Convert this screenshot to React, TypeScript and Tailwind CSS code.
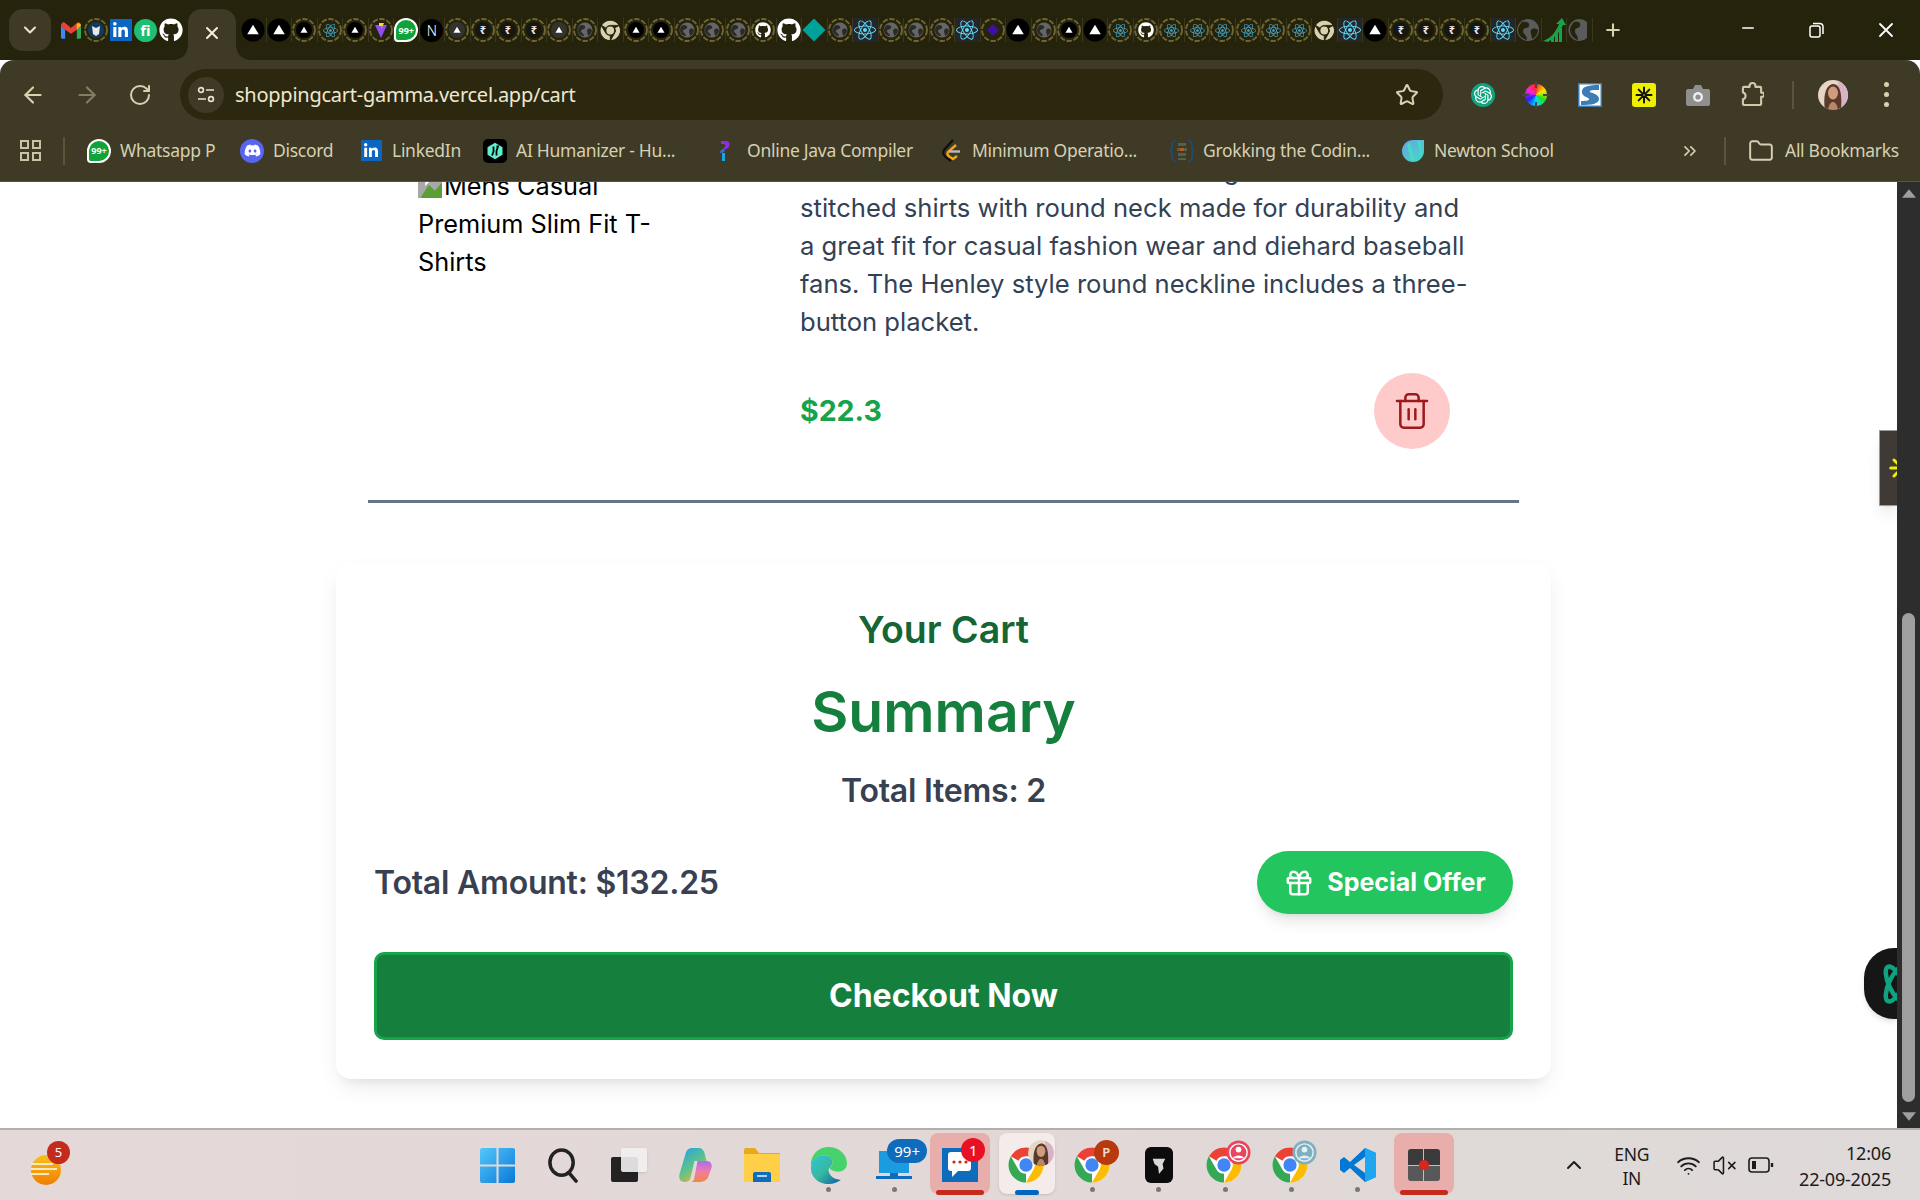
import React from "react";
import { ArrowLeft, ArrowRight, RotateCw, Star, Folder, ChevronDown, X, Plus, Minus, Gift, Trash2, ChevronsRight, ChevronUp, Wifi, VolumeX } from "lucide-react";
import { FaGithub, FaReact, FaDiscord, FaLinkedinIn } from "react-icons/fa";
import { SiOpenai } from "react-icons/si";

const Ring = ({ children }: { children?: React.ReactNode }) => (
  <svg viewBox="0 0 24 24" className="w-[24px] h-[24px]">
    <circle cx="12" cy="12" r="11" fill="none" stroke="#6f6632" strokeWidth="1.9" strokeDasharray="5.5 1.6" />
    {children}
  </svg>
);
const Tri = ({ s = 1, c = "#fff" }: { s?: number; c?: string }) => (
  <path d={`M12 ${12 - 4.5 * s} L${12 + 5 * s} ${12 + 3.8 * s} L${12 - 5 * s} ${12 + 3.8 * s} Z`} fill={c} />
);
const Globe = ({ fill = "#666" }: { fill?: string }) => (
  <g>
    <circle cx="12" cy="12" r="7.5" fill={fill} />
    <path d="M8 7c3 0 5 1 4 3s-4 1-4 3 3 2 3 5c-3 0-6-2-6-6 0-2 1-4 3-5zM15 11c2-1 3 0 4 1 0 3-2 5-4 6 0-3-2-5 0-7z" fill="#2a2a28" />
  </g>
);
const Atom = ({ size = 18, cls = "text-[#61dafb]" }: { size?: number; cls?: string }) => <FaReact size={size} className={cls} />;

function ChromeLogo({ mono, size = 40 }: { mono?: string; size?: number }) {
  const wedge = "M3.34 7A10 10 0 0 1 20.66 7L12 7A5 5 0 0 0 7.67 9.5Z";
  const st = mono ? { stroke: "#26230c", strokeWidth: 0.9 } : {};
  return (
    <svg viewBox="0 0 24 24" width={size} height={size}>
      <circle cx="12" cy="12" r="10" fill={mono ? "#26230c" : "#fff"} />
      <path d={wedge} fill={mono || "#ea4335"} {...st} />
      <path d={wedge} fill={mono || "#fbbc04"} transform="rotate(120 12 12)" {...st} />
      <path d={wedge} fill={mono || "#34a853"} transform="rotate(240 12 12)" {...st} />
      <circle cx="12" cy="12" r="3.8" fill={mono || "#4285f4"} />
    </svg>
  );
}

function TabIcon({ k }: { k: string }) {
  switch (k) {
    case "t":
      return <svg viewBox="0 0 24 24" className="w-[24px] h-[24px]"><circle cx="12" cy="12" r="11.5" fill="#000" /><Tri s={1.15} /></svg>;
    case "rt":
      return <Ring><circle cx="12" cy="12" r="8" fill="#000" /><Tri s={0.7} /></Ring>;
    case "rg":
      return <Ring><circle cx="12" cy="12" r="8" fill="#33332f" /><Tri s={0.7} /></Ring>;
    case "rr":
      return <Ring><circle cx="12" cy="12" r="8" fill="#17170f" /><text x="12" y="16" textAnchor="middle" fontSize="11" fontWeight="700" fill="#eee" fontFamily="'Noto Sans',sans-serif">₹</text></Ring>;
    case "rw":
      return <Ring><Globe /></Ring>;
    case "g":
      return <svg viewBox="0 0 24 24" className="w-[24px] h-[24px]"><circle cx="12" cy="12" r="11" fill="#5a5b5c" /><path d="M6 4c5-1 8 1 7 4s-6 1-6 5 4 3 4 9c-5-1-9-5-9-10 0-3 2-6 4-8zM16 11c3-1 5 0 6 1 0 4-3 8-6 9 0-4-3-7 0-10z" fill="#26230c" /></svg>;
    case "rc":
      return <Ring><foreignObject x="4.5" y="4.5" width="15" height="15"><div className="flex"><Atom size={15} cls="text-[#4aa8c8]" /></div></foreignObject></Ring>;
    case "rh":
      return <Ring><foreignObject x="4" y="4" width="16" height="16"><div className="flex"><FaGithub size={16} className="text-white" /></div></foreignObject></Ring>;
    case "gh":
      return <FaGithub size={24} className="text-white" />;
    case "re":
      return <div className="w-[24px] h-[24px] bg-[#23272a] flex items-center justify-center"><Atom size={22} /></div>;
    case "ch":
      return <ChromeLogo mono="#d8d2ae" size={25} />;
    case "v":
      return <Ring><path d="M6 7 L18 7 L12 20Z" fill="#8f4cf0" /><path d="M10 5h5l-3 7 1-4h-3z" fill="#fdd835" /></Ring>;
    case "w":
      return <div className="w-[24px] h-[24px] rounded-[50%_50%_50%_4px] bg-[#0fa33a] border-2 border-white flex items-center justify-center text-[9px] leading-none font-bold text-white">99+</div>;
    case "n":
      return <div className="w-[23px] h-[23px] rounded-full bg-black flex items-center justify-center text-white text-[14px] font-light">N</div>;
    case "d":
      return <svg viewBox="0 0 24 24" className="w-[24px] h-[24px]"><path d="M12 0.5 L23.5 12 L12 23.5 L0.5 12Z" fill="#00a19b" /></svg>;
    case "p":
      return <Ring><path d="M12 6l6 6-6 6-6-6z" fill="#3f10a0" /></Ring>;
    case "ar":
      return <svg viewBox="0 0 24 24" className="w-[24px] h-[24px]"><path d="M1 23 C9 20 14 14 17 6 L14 6 L20 0 L24 7 L21 7 C18 14 12 20 6 24Z" fill="#16a34a" /><path d="M9 24h3v-6h-3zM13 24h3V13h-3zM17 24h3V10h-3z" fill="#16a34a" /></svg>;
    case "gc":
      return <svg viewBox="0 0 24 24" className="w-[24px] h-[24px]"><path d="M20 4A11 11 0 1 0 20 20Z" fill="#5a5b5c" /><path d="M7 4c5-1 7 1 6 4s-5 1-5 5 3 3 3 9c-4-1-8-5-8-10 0-3 2-6 4-8z" fill="#26230c" /></svg>;
    default:
      return null;
  }
}

const firstTabs = (
  <>
    <div className="w-[25px] flex justify-center">
      <svg viewBox="0 0 24 20" className="w-[20px] h-[19px]">
        <path d="M0 4v14a2 2 0 0 0 2 2h3V9z" fill="#4285f4" />
        <path d="M19 20h3a2 2 0 0 0 2-2V4l-5 5z" fill="#34a853" />
        <path d="M0 4 5 9l7 5 7-5 5-5c0-3-3-5-5-3l-7 6-7-6C3-1 0 1 0 4z" fill="#ea4335" />
        <path d="M19 2v7l5-5c0-2-3-4-5-2z" fill="#fbbc04" />
      </svg>
    </div>
    <div className="w-[25px] flex justify-center">
      <svg viewBox="0 0 24 24" className="w-[24px] h-[24px]"><circle cx="12" cy="12" r="11" fill="none" stroke="#6f6632" strokeWidth="1.9" strokeDasharray="5.5 1.6" /><circle cx="12" cy="12" r="8" fill="#123a5c" /><path d="M8 8l4 2 4-2-1 8-3 2-3-2z" fill="#e8e8e8" /></svg>
    </div>
    <div className="w-[25px] flex justify-center">
      <div className="w-[22px] h-[22px] bg-[#0a66c2] flex items-center justify-center"><FaLinkedinIn size={17} className="text-white" /></div>
    </div>
    <div className="w-[25px] flex justify-center">
      <div className="w-[23px] h-[23px] rounded-full bg-[#1dbf73] flex items-center justify-center text-white text-[15px] font-bold leading-none">fi</div>
    </div>
    <div className="w-[25px] flex justify-center"><FaGithub size={24} className="text-white" /></div>
  </>
);

const tabs = "t t rt rc rt v w n rg rr rr rr rg rw ch rt rt rw rw rw rh gh d rw re rw rw rw re p t rw rt t rc rh rc rc rc rc rc rc ch re t rr rr rr rr re g ar gc".split(" ");

const bookmarks: { w: string; t: string; tw: string; icon: React.ReactNode }[] = [
  { w: "w-[153px]", tw: "w-[95px]", t: "Whatsapp P", icon: <TabIcon k="w" /> },
  { w: "w-[119px]", tw: "w-[60px]", t: "Discord", icon: <div className="w-[24px] h-[24px] rounded-full bg-[#5865f2] flex items-center justify-center"><FaDiscord size={17} className="text-white" /></div> },
  { w: "w-[124px]", tw: "w-[66px]", t: "LinkedIn", icon: <div className="w-[21px] h-[21px] bg-[#0a66c2] flex items-center justify-center"><FaLinkedinIn size={16} className="text-white" /></div> },
  { w: "w-[229px]", tw: "w-[160px]", t: "AI Humanizer - Hu...", icon: <div className="w-[24px] h-[24px] rounded-[5px] bg-black flex items-center justify-center"><svg viewBox="0 0 24 24" className="w-[18px] h-[22px]"><path d="M12 1 22 7v10l-10 6L2 17V7z" fill="#5ef0d0" /><path d="M10 6v7l-2 5M14 6l2 0-2 6v6" stroke="#000" strokeWidth="2.4" fill="none" /></svg></div> },
  { w: "w-[227px]", tw: "w-[167px]", t: "Online Java Compiler", icon: <svg viewBox="0 0 24 24" className="w-[24px] h-[24px]"><path d="M9 2h5c5 0 5 7 0 8l-3 1 1-3c2 0 2-2 0-3H9z" fill="#8b2fe0" /><path d="M12 10c-3 0-4 2-4 4l2 0 3-2z" fill="#2f6fe0" /><path d="M10 14h3v8h-3z" fill="#18a8e0" /></svg> },
  { w: "w-[231px]", tw: "w-[163px]", t: "Minimum Operatio...", icon: <svg viewBox="0 0 24 24" className="w-[24px] h-[24px]"><path d="M14 1 5 11c-2 3 0 6 3 8l4 3" fill="none" stroke="#111" strokeWidth="2.4" /><path d="M17 6 9 13c-1 2 0 4 2 5l3 2 4-3" fill="none" stroke="#f2a41c" strokeWidth="2.4" /><path d="M10 12.5h11" stroke="#bbb" strokeWidth="2.4" /></svg> },
  { w: "w-[231px]", tw: "w-[167px]", t: "Grokking the Codin...", icon: <svg viewBox="0 0 24 24" className="w-[24px] h-[24px]"><path d="M6 1 2 4v6l-2 2 2 2v6l4 3M18 1l4 3v6l2 2-2 2v6l-4 3" fill="none" stroke="#1b4f82" strokeWidth="1.4" /><path d="M8 4h8v3H8zM7 9h10v3H7zM8 14h8v3H8zM8 19h8v2H8z" fill="#53604a" /><path d="M10 9h4v3h-4z" fill="#b4552a" /></svg> },
  { w: "w-[154px]", tw: "w-[120px]", t: "Newton School", icon: <svg viewBox="0 0 24 24" className="w-[24px] h-[24px]"><defs><linearGradient id="nw" x1="0" y1="0" x2="1" y2="1"><stop offset="0" stopColor="#6d9fe8" /><stop offset="1" stopColor="#3be0c0" /></linearGradient></defs><path d="M12 1h11v11A11 11 0 1 1 12 1z" fill="url(#nw)" /><path d="M9 3l5 18h-4L6 6zM16 2h4v14z" fill="#4cd5c8" /></svg> },
];

function Tray({ children }: { children: React.ReactNode }) {
  return <div className="relative w-[66.2px] h-full flex items-center justify-center">{children}</div>;
}
const Dot = () => <span className="absolute bottom-[8px] left-1/2 -ml-[2.5px] w-[5px] h-[5px] rounded-full bg-[#7a7777]" />;

function Avatar({ size }: { size: number }) {
  return (
    <svg viewBox="0 0 30 30" width={size} height={size} className="rounded-full">
      <rect width="30" height="30" fill="#e6d6c8" />
      <rect x="20" width="10" height="30" fill="#d8b3c6" />
      <path d="M7 30C5 18 7 5 15 4c8 0 9 12 8 26z" fill="#5a3b2a" />
      <ellipse cx="15" cy="13" rx="5" ry="6.5" fill="#cf9d7e" />
      <path d="M10 30c1-6 3-8 5-8s4 2 5 8z" fill="#b9866a" />
    </svg>
  );
}

function Spokes({ cls, color }: { cls: string; color: string }) {
  return (
    <svg viewBox="0 0 24 24" className={cls} stroke={color} strokeWidth="2.4" strokeLinecap="round">
      <path d="M12 3v7M12 14v7M3 12h7M14 12h7M5.6 5.6l5 5M13.4 13.4l5 5M18.4 5.6l-5 5M10.6 13.4l-5 5" />
    </svg>
  );
}

export default function App() {
  return (
    <div className="w-[1920px] h-[1200px] overflow-hidden flex flex-col bg-white font-['Inter',sans-serif]">
      {/* tab strip */}
      <div className="h-[60px] shrink-0 flex bg-[#26230c] font-['Noto_Sans',sans-serif]">
        <div className="ml-[9px] mt-[9px] w-[42px] h-[42px] rounded-[14px] bg-[#3f3a26] flex items-center justify-center">
          <ChevronDown size={20} strokeWidth={2.5} className="text-[#e8e4cc]" />
        </div>
        <div className="ml-[7px] mt-[18px] h-[24px] flex items-center">{firstTabs}</div>
        <div className="relative ml-[5px] mt-[9px] w-[48px] h-[51px] rounded-t-[14px] bg-[#3f3a26] flex items-center justify-center">
          <span className="absolute -left-[14px] bottom-0 w-[14px] h-[14px] bg-[radial-gradient(circle_at_0_0,transparent_13.5px,#3f3a26_14px)]" />
          <span className="absolute -right-[14px] bottom-0 w-[14px] h-[14px] bg-[radial-gradient(circle_at_100%_0,transparent_13.5px,#3f3a26_14px)]" />
          <X size={20} strokeWidth={2.5} className="text-[#f0ecd8] -mt-[4px]" />
        </div>
        <div className="ml-[5px] mt-[18px] h-[24px] flex items-center">
          {tabs.map((k, i) => (
            <div key={i} className="w-[25.5px] h-[24px] flex items-center justify-center border-r border-[#3a3720] overflow-visible">
              <TabIcon k={k} />
            </div>
          ))}
        </div>
        <div className="ml-[8px] mt-[18px] w-[24px] h-[24px] flex items-center justify-center">
          <Plus size={20} strokeWidth={2.5} className="text-[#d8d2ae]" />
        </div>
        <div className="ml-auto flex">
          <div className="w-[69px] mt-[16px] h-[24px] flex items-center justify-center"><Minus size={18} strokeWidth={2} className="text-white" /></div>
          <div className="w-[69px] mt-[18px] h-[24px] flex items-center justify-center">
            <svg viewBox="0 0 16 16" className="w-[16px] h-[16px]" fill="none" stroke="#fff" strokeWidth="1.5"><rect x="1" y="4" width="10" height="11" rx="2" /><path d="M4 1.5h7a3 3 0 0 1 3 3V12" /></svg>
          </div>
          <div className="w-[69px] mt-[18px] h-[24px] flex items-center justify-center"><X size={24} strokeWidth={1.8} className="text-white" /></div>
        </div>
      </div>

      {/* toolbar */}
      <div className="h-[60px] shrink-0 flex bg-[#3f3a26] rounded-t-[14px] pt-[9px] font-['Noto_Sans',sans-serif]">
        <div className="w-[180px] h-[51px] flex items-center pl-[20px] gap-[28px] text-[#d8d2ae]">
          <ArrowLeft size={26} strokeWidth={2} />
          <ArrowRight size={26} strokeWidth={2} className="text-[#837d62]" />
          <RotateCw size={24} strokeWidth={2} />
        </div>
        <div className="w-[1263px] h-[51px] rounded-full bg-[#2c280f] flex items-center pl-[8px] pr-[24px]">
          <div className="w-[36px] h-[36px] rounded-full bg-[#3f3a26] flex items-center justify-center">
            <svg viewBox="0 0 20 20" className="w-[20px] h-[20px]" fill="none" stroke="#e8e4cc" strokeWidth="1.7"><circle cx="5" cy="5" r="2.4" /><path d="M10 5h8M2 14h8" /><circle cx="15" cy="14" r="2.4" /></svg>
          </div>
          <span className="ml-[11px] text-[20px] leading-none text-[#ece8d2] tracking-[-0.25px]">shoppingcart-gamma.vercel.app/cart</span>
          <Star size={24} strokeWidth={2} className="ml-auto text-[#d8d2ae]" />
        </div>
        <div className="flex-1 h-[51px] flex items-center text-[#cfc9a8]">
          <div className="w-[66px] flex justify-end pr-[14px]">
            <div className="w-[24px] h-[24px] rounded-full bg-[#10a37f] flex items-center justify-center"><SiOpenai size={18} className="text-white" /></div>
          </div>
          <div className="w-[54px] flex justify-center">
            <div className="relative w-[22px] h-[22px] rounded-full bg-[conic-gradient(#ff2a2a,#ffe600,#22dd22,#00ddff,#2222ff,#ff22dd,#ff2a2a)]">
              <span className="absolute left-[10px] -top-[3px] w-[2px] h-[7px] bg-[#444]" />
              <span className="absolute left-[10px] -bottom-[3px] w-[2px] h-[7px] bg-[#444]" />
              <span className="absolute top-[10px] -left-[3px] w-[7px] h-[2px] bg-[#444]" />
              <span className="absolute top-[10px] -right-[3px] w-[7px] h-[2px] bg-[#444]" />
            </div>
          </div>
          <div className="w-[54px] flex justify-center">
            <svg viewBox="0 0 24 24" className="w-[24px] h-[24px]"><rect width="24" height="24" fill="#fff" /><path d="M4 10C3 4 9 2 21 2v5c-6 0-10 0-9 2 1 1 9 2 9 7 0 5-8 6-18 6v-4c6 0 9-1 8-2-1-2-6-2-7-6z" fill="#3d7db4" /><rect x="0.75" y="0.75" width="22.5" height="22.5" fill="none" stroke="#3d7db4" strokeWidth="1.5" /></svg>
          </div>
          <div className="w-[54px] flex justify-center">
            <div className="w-[24px] h-[24px] rounded-[3px] bg-[#eef000] flex items-center justify-center">
              <Spokes cls="w-[20px] h-[20px]" color="#111" />
            </div>
          </div>
          <div className="w-[54px] flex justify-center">
            <svg viewBox="0 0 24 22" className="w-[24px] h-[22px]"><path d="M2 5h5l2-4h6l2 4h5a2 2 0 0 1 2 2v13a2 2 0 0 1-2 2H2a2 2 0 0 1-2-2V7a2 2 0 0 1 2-2z" fill="#8f8f8f" /><circle cx="12" cy="13" r="5" fill="#eee" /><circle cx="12" cy="13" r="2.6" fill="#8f8f8f" /></svg>
          </div>
          <div className="w-[55px] flex justify-center">
            <svg viewBox="0 0 24 26" className="w-[23px] h-[25px]" fill="none" stroke="#cfc9a8" strokeWidth="2.2" strokeLinejoin="round"><path d="M3 5h6V4a3 3 0 0 1 6 0v1h5a1 1 0 0 1 1 1v5h1a2.2 2.2 0 0 1 0 4.4h-1V23a1 1 0 0 1-1 1H3a1 1 0 0 1-1-1v-5a3.6 3.6 0 0 0 0-7V6a1 1 0 0 1 1-1z" /></svg>
          </div>
          <div className="w-[25px] flex justify-center"><span className="w-[2px] h-[28px] bg-[#5a5438]" /></div>
          <div className="ml-[7px] w-[41px] flex justify-center"><Avatar size={30} /></div>
          <div className="flex-1 flex flex-col items-center gap-[5px]">
            <span className="w-[5px] h-[5px] rounded-full bg-[#d8d2ae]" />
            <span className="w-[5px] h-[5px] rounded-full bg-[#d8d2ae]" />
            <span className="w-[5px] h-[5px] rounded-full bg-[#d8d2ae]" />
          </div>
        </div>
      </div>

      {/* bookmarks */}
      <div className="h-[62px] shrink-0 flex items-center bg-[#3f3a26] border-b border-[#55534a] font-['Noto_Sans',sans-serif] text-[17.5px] text-[#d6d0b2]">
        <div className="w-[60px] flex justify-center">
          <div className="grid grid-cols-2 gap-[3px] ml-[1px]">
            <span className="w-[9px] h-[9px] border-2 border-[#c9c3a4]" /><span className="w-[9px] h-[9px] border-2 border-[#c9c3a4]" />
            <span className="w-[9px] h-[9px] border-2 border-[#c9c3a4]" /><span className="w-[9px] h-[9px] border-2 border-[#c9c3a4]" />
          </div>
        </div>
        <span className="w-[2px] h-[28px] bg-[#5a5438] ml-[3px]" />
        <div className="ml-[22px] flex items-center">
          {bookmarks.map((b, i) => (
            <div key={i} className={`${b.w} shrink-0 flex items-center`}>
              <div className="w-[24px] h-[24px] flex items-center justify-center">{b.icon}</div>
              <span className={`${i === 4 ? "ml-[11px]" : "ml-[9px]"} ${b.tw} whitespace-nowrap tracking-[-0.28px]`}>{b.t}</span>
            </div>
          ))}
        </div>
        <div className="ml-[123px] w-[24px] flex justify-center"><ChevronsRight size={20} strokeWidth={2} /></div>
        <span className="ml-[22px] w-[2px] h-[28px] bg-[#5a5438]" />
        <Folder size={26} strokeWidth={1.8} className="ml-[22px]" />
        <span className="ml-[11px] whitespace-nowrap tracking-[-0.3px]">All Bookmarks</span>
      </div>

      {/* page + scrollbar */}
      <div className="flex-1 min-h-0 flex">
        <main className="relative flex-1 overflow-hidden bg-white">
          <div className="w-[1887px] -mt-[31px] flex flex-col items-center">
            <div className="w-[1151px] border-b-[3px] border-[#64748b] pb-[51px] flex">
              <div className="ml-[50px] mt-[16px] w-[250px] text-[25.3px] leading-[38px] text-black">
                <svg viewBox="0 0 20 20" className="inline-block w-[24px] h-[24px] align-[-3px] mr-[2px]"><rect width="20" height="20" fill="#a8a8a8" /><path d="M2 20 L9 9 L14 14 L20 7 V20Z" fill="#5a9e35" /><path d="M6 0h10L6 10z" fill="#fff" /></svg>
                Mens Casual Premium Slim Fit T-Shirts
              </div>
              <div className="ml-[132px] w-[680px]">
                <p className="text-[25.6px] leading-[38px] text-[#334155] w-[674px]">
                  breathable and comfortable wearing. And Solid<br />stitched shirts with round neck made for durability and a great fit for casual fashion wear and diehard baseball fans. The Henley style round neckline includes a three-button placket.
                </p>
                <div className="mt-[32px] flex items-center justify-between pr-[30px]">
                  <span className="text-[28.5px] font-bold text-[#16a34a]">$22.3</span>
                  <button className="w-[76px] h-[76px] rounded-full bg-[#fecaca] flex items-center justify-center">
                    <Trash2 size={40} strokeWidth={1.5} className="text-[#991b1b]" />
                  </button>
                </div>
              </div>
            </div>
            <div className="mt-[60px] w-[1215px] rounded-[15px] bg-white shadow-[0_10px_25px_-5px_rgba(0,0,0,0.1),0_8px_10px_-6px_rgba(0,0,0,0.06)] px-[38px] pt-[44px] pb-[39px] flex flex-col items-center">
              <h2 className="text-[37.5px] leading-[45px] font-semibold text-[#166534]">Your Cart</h2>
              <h1 className="mt-[22px] text-[57px] leading-[75px] font-semibold text-[#15803d]">Summary</h1>
              <p className="mt-[22px] text-[32px] leading-[40px] font-semibold tracking-[-0.23px] text-[#374151]">Total Items: 2</p>
              <div className="mt-[40px] w-full flex items-center justify-between">
                <span className="text-[32px] font-semibold tracking-[-0.23px] text-[#374151]">Total Amount: $132.25</span>
                <button className="w-[256px] h-[63px] rounded-full bg-[#22c55e] shadow-lg flex items-center justify-center gap-[13px] text-white text-[25px] font-bold">
                  <Gift size={30} strokeWidth={2} />
                  Special Offer
                </button>
              </div>
              <button className="mt-[38px] w-full h-[88px] rounded-[10px] bg-[#15803d] border-[3px] border-[#16a34a] text-white text-[32px] font-bold">Checkout Now</button>
            </div>
          </div>
          {/* floating extensions */}
          <div className="absolute right-0 top-[248px] w-[18px] h-[76px] bg-[#3f3a36] border border-[#9a9a9a] border-r-0 shadow-lg overflow-hidden flex items-center pl-[7px]">
            <Spokes cls="w-[30px] h-[30px] shrink-0" color="#eef000" />
          </div>
          <div className="absolute right-0 top-[766px] w-[33px] h-[71px] rounded-l-[30px] bg-[#161616] shadow-md overflow-hidden flex items-center pl-[17px]">
            <svg viewBox="0 0 30 40" className="w-[30px] h-[40px] shrink-0" fill="none" stroke="#10a37f" strokeWidth="4.5"><ellipse cx="15" cy="20" rx="7" ry="19" transform="rotate(-25 15 20)" /><ellipse cx="15" cy="20" rx="7" ry="19" transform="rotate(25 15 20)" /></svg>
          </div>
        </main>
        <div className="w-[23px] shrink-0 bg-[#2d2d2d] flex flex-col items-center">
          <svg viewBox="0 0 10 6" className="w-[14px] h-[9px] mt-[7px] fill-[#9f9f9f]"><path d="M5 0 10 6H0z" /></svg>
          <div className="mt-[415px] w-[13px] h-[489px] rounded-full bg-[#9f9f9f]" />
          <svg viewBox="0 0 10 6" className="w-[14px] h-[9px] mt-[10px] fill-[#9f9f9f]"><path d="M5 6 0 0h10z" /></svg>
        </div>
      </div>

      {/* taskbar */}
      <div className="h-[72px] shrink-0 border-t-2 border-[#b3afad] bg-[linear-gradient(90deg,#e4d9d8,#e2d8d7_50%,#dedad9)] flex items-center font-['Noto_Sans',sans-serif] text-[#1c1c1c]">
        <div className="relative ml-[31px] w-[32px] h-[32px] mt-[12px]">
          <div className="w-[30px] h-[30px] rounded-full bg-[linear-gradient(#f9c21a,#ef7d00)]" />
          <div className="absolute left-0 top-[8px] flex flex-col gap-[3px]">
            <span className="w-[22px] h-[2px] bg-[#f6e7c4]" /><span className="w-[26px] h-[2px] bg-[#f6e7c4]" /><span className="w-[18px] h-[2px] bg-[#f6e7c4]" />
          </div>
          <span className="absolute left-[16px] -top-[14px] w-[23px] h-[23px] rounded-full bg-[#c42b1c] text-white text-[13px] flex items-center justify-center">5</span>
        </div>
        <div className="ml-[401px] h-full flex">
          <Tray>
            <svg viewBox="0 0 34 34" className="w-[35px] h-[35px]"><defs><linearGradient id="wn" x1="0" y1="0" x2="1" y2="1"><stop offset="0" stopColor="#54c8fa" /><stop offset="1" stopColor="#0a78d8" /></linearGradient></defs><path d="M0 2a2 2 0 0 1 2-2h14v16H0zM18 0h14a2 2 0 0 1 2 2v14H18zM0 18h16v16H2a2 2 0 0 1-2-2zM18 18h16v14a2 2 0 0 1-2 2H18z" fill="url(#wn)" /></svg>
          </Tray>
          <Tray>
            <svg viewBox="0 0 34 36" className="w-[33px] h-[35px]" fill="none" stroke="#222" strokeWidth="3.6" strokeLinecap="round"><ellipse cx="15" cy="15" rx="12" ry="13" /><path d="M23 26l7 8" /></svg>
          </Tray>
          <Tray>
            <div className="relative w-[36px] h-[34px]">
              <div className="absolute left-0 bottom-0 w-[27px] h-[25px] rounded-[2px] bg-[#232323]" />
              <div className="absolute right-0 top-0 w-[26px] h-[24px] rounded-[2px] bg-[#f2f0f0]/90 shadow-sm" />
            </div>
          </Tray>
          <Tray>
            <svg viewBox="0 0 36 36" className="w-[37px] h-[36px]"><defs><linearGradient id="co" x1="0" y1="0" x2="0.6" y2="1"><stop offset="0" stopColor="#1f9fe8" /><stop offset="0.6" stopColor="#5ec48a" /><stop offset="1" stopColor="#e8b23c" /></linearGradient><linearGradient id="co2" x1="0" y1="0" x2="0" y2="1"><stop offset="0" stopColor="#a86ef0" /><stop offset="0.5" stopColor="#f27aa8" /><stop offset="1" stopColor="#f08a3c" /></linearGradient></defs><path d="M15 1h7c2 0 4 2 5 5l2 8H17l-4 17c-1 3-3 4-6 4-4 0-6-3-5-8L8 7c1-4 3-6 7-6z" fill="url(#co)" /><path d="M21 35h-7c2-1 3-3 3-5l3-16h9c4 0 6 3 5 7l-3 8c-1 4-5 6-10 6z" fill="url(#co2)" /></svg>
          </Tray>
          <Tray>
            <svg viewBox="0 0 36 34" className="w-[36px] h-[34px]"><path d="M0 2a2 2 0 0 1 2-2h9l4 5h21v29H0z" fill="#e8a91f" /><path d="M0 6h36v28H0z" fill="#ffcf48" /><path d="M11 24h14a2 2 0 0 1 2 2v8H9v-8a2 2 0 0 1 2-2z" fill="#0f6cbd" /><path d="M13 27h10v2H13z" fill="#a9d6f5" /></svg>
          </Tray>
          <Tray>
            <svg viewBox="0 0 36 36" className="w-[37px] h-[37px]"><defs><linearGradient id="ed" x1="0" y1="0" x2="1" y2="1"><stop offset="0" stopColor="#2ec7d8" /><stop offset="0.5" stopColor="#37b8a0" /><stop offset="1" stopColor="#0c59a4" /></linearGradient></defs><path d="M18 0c10 0 18 7 18 16 0 5-4 8-9 8-4 0-8-2-8-4 0-1 3-1 3-5 0-4-4-7-8-7C7 8 2 13 1 19 0 8 8 0 18 0z" fill="#47d36b" /><path d="M1 19C2 11 8 8 14 8c4 0 8 3 8 7 0 3-3 4-4 7 0 6 6 10 12 10-3 2-7 4-12 4C8 36 0 29 1 19z" fill="url(#ed)" /></svg>
            <Dot />
          </Tray>
          <Tray>
            <svg viewBox="0 0 36 36" className="w-[36px] h-[36px]"><path d="M3 4h30v22H3z" fill="#1b9be0" /><path d="M14 26h8v6h-8zM0 29h36v3H0z" fill="#0f6cbd" /></svg>
            <span className="absolute left-[26px] top-[9px] w-[40px] h-[24px] rounded-full bg-[#0f6cbd] text-white text-[15px] flex items-center justify-center leading-none">99+</span>
            <Dot />
          </Tray>
          <Tray>
            <div className="absolute left-[3px] top-[3px] w-[60px] h-[61px] rounded-[8px] bg-[#e8aeab]" />
            <svg viewBox="0 0 36 36" className="relative w-[36px] h-[36px]"><path d="M0 1h36v34H0z" fill="#0f6cbd" /><path d="M6 8a3 3 0 0 1 3-3h17a3 3 0 0 1 3 3v13a3 3 0 0 1-3 3H16l-6 6v-6H9a3 3 0 0 1-3-3z" fill="#fff" /><circle cx="12" cy="15" r="1.6" fill="#c42b1c" /><circle cx="18" cy="15" r="1.6" fill="#c42b1c" /><circle cx="24" cy="15" r="1.6" fill="#c42b1c" /></svg>
            <span className="absolute left-[34px] top-[8px] w-[24px] h-[24px] rounded-full bg-[#e81123] text-white text-[15px] flex items-center justify-center leading-none">1</span>
            <span className="absolute bottom-[5px] left-[9px] w-[48px] h-[5px] rounded-full bg-[#c42b1c]" />
          </Tray>
          <Tray>
            <div className="absolute left-[5px] top-[3px] w-[56px] h-[61px] rounded-[8px] bg-[#f3eceb] shadow-sm" />
            <div className="relative -ml-[2px]"><ChromeLogo size={42} /></div>
            <div className="absolute left-[34px] top-[10px] rounded-full overflow-hidden"><Avatar size={26} /></div>
            <span className="absolute bottom-[5px] left-[21px] w-[24px] h-[5px] rounded-full bg-[#0067c0]" />
          </Tray>
          <Tray>
            <div className="-ml-[2px]"><ChromeLogo size={42} /></div>
            <span className="absolute left-[34px] top-[10px] w-[25px] h-[25px] rounded-full bg-[#b7390d] text-[#f4dfd6] text-[13px] font-semibold flex items-center justify-center leading-none">P</span>
            <Dot />
          </Tray>
          <Tray>
            <div className="w-[28px] h-[36px] rounded-[6px] bg-[#0c0c0c] flex items-center justify-center">
              <svg viewBox="0 0 20 24" className="w-[18px] h-[22px]"><path d="M3 5h14l-3 6 1 5-5 6-1-8-4-3z" fill="#d8d8d8" /></svg>
            </div>
            <Dot />
          </Tray>
          <Tray>
            <div className="-ml-[2px]"><ChromeLogo size={42} /></div>
            <svg viewBox="0 0 26 26" className="absolute left-[34px] top-[10px] w-[25px] h-[25px]"><circle cx="13" cy="13" r="12.5" fill="#e8455e" /><circle cx="13" cy="13" r="9" fill="none" stroke="#fff" strokeWidth="1.5" /><circle cx="13" cy="10" r="3" fill="#fff" /><path d="M7 19c2-4 10-4 12 0z" fill="#fff" /></svg>
            <Dot />
          </Tray>
          <Tray>
            <div className="-ml-[2px]"><ChromeLogo size={42} /></div>
            <svg viewBox="0 0 26 26" className="absolute left-[34px] top-[10px] w-[25px] h-[25px]"><circle cx="13" cy="13" r="12.5" fill="#7fb0c2" /><circle cx="13" cy="13" r="9" fill="none" stroke="#e5f0f4" strokeWidth="1.5" /><circle cx="13" cy="10" r="3" fill="#e5f0f4" /><path d="M7 19c2-4 10-4 12 0z" fill="#e5f0f4" /></svg>
            <Dot />
          </Tray>
          <Tray>
            <svg viewBox="0 0 36 36" className="w-[36px] h-[36px]"><path d="M25 1 36 6v24l-11 5L10 21l-6 5-4-3v-10l4-3 6 5z" fill="#0078d4" /><path d="M25 1 36 6v24l-11 5z" fill="#1ea7f0" /><path d="M25 10 14 18l11 8z" fill="#e2d8d7" /></svg>
            <Dot />
          </Tray>
          <Tray>
            <div className="absolute left-[3px] top-[3px] w-[60px] h-[61px] rounded-[8px] bg-[#e8aeab]" />
            <div className="relative w-[32px] h-[32px] grid grid-cols-2 gap-[1px]">
              <span className="bg-[#3b3b3b] rounded-tl-[3px]" /><span className="bg-[#3b3b3b] rounded-tr-[3px]" />
              <span className="bg-[#585858] rounded-bl-[3px]" /><span className="bg-[#585858] rounded-br-[3px]" />
              <span className="absolute left-[11px] top-[11px] w-[10px] h-[10px] rounded-full bg-[#d8261c]" />
            </div>
            <span className="absolute bottom-[5px] left-[9px] w-[48px] h-[5px] rounded-full bg-[#c42b1c]" />
          </Tray>
        </div>
        <ChevronUp size={24} strokeWidth={2} className="ml-[105px]" />
        <div className="ml-[16px] w-[60px] flex flex-col items-center text-[17.5px] leading-[24px] tracking-[-0.2px] pt-[1px]">
          <span>ENG</span>
          <span>IN</span>
        </div>
        <Wifi size={25} strokeWidth={1.8} className="ml-[14px]" />
        <VolumeX size={25} strokeWidth={1.5} className="ml-[11px]" />
        <svg viewBox="0 0 26 16" className="ml-[11px] w-[26px] h-[16px]" fill="none" stroke="#1c1c1c" strokeWidth="1.6"><rect x="1" y="1" width="20" height="14" rx="3" /><rect x="4" y="4" width="4" height="8" fill="#1c1c1c" stroke="none" /><path d="M24 6v4" strokeWidth="2.4" /></svg>
        <div className="ml-auto mr-[29px] flex flex-col items-end text-[18px] leading-[24px] tracking-[-0.2px] pt-[1px] gap-[2px]">
          <span>12:06</span>
          <span>22-09-2025</span>
        </div>
      </div>
    </div>
  );
}
